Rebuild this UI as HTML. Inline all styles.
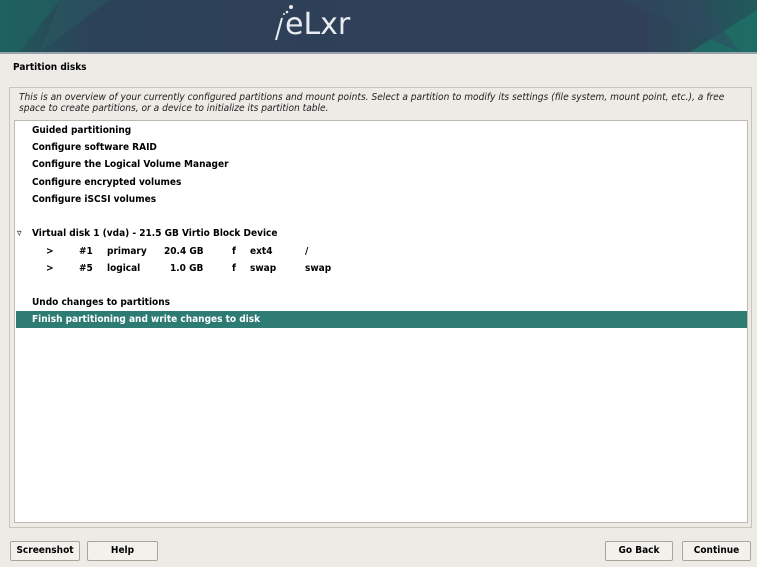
<!DOCTYPE html>
<html><head><meta charset="utf-8"><style>
*{margin:0;padding:0;box-sizing:border-box}
body{width:757px;height:567px;background:#edebe6;font-family:"DejaVu Sans Condensed","DejaVu Sans",sans-serif;position:relative;overflow:hidden;color:#000}
.hdr{position:absolute;left:0;top:0;width:757px;height:52px;background:linear-gradient(90deg,#1f5a5a 0%,#2c4258 12%,#2f4058 50%,#2f4058 85%,#215a5c 100%);overflow:hidden}
.line{position:absolute;left:0;top:52px;width:757px;height:2px;background:#9aa3ad}
.logo{position:absolute;left:285px;top:7px;color:#e8ecf0;font-family:"DejaVu Sans",sans-serif;font-size:30px}
.t{position:absolute;font-weight:bold;font-size:10px;white-space:pre}
.frame{position:absolute;left:9px;top:87px;width:743px;height:441px;border:1px solid #c9c5bd}
.list{position:absolute;left:14px;top:120px;width:734px;height:403px;background:#fff;border:1px solid #bdb9b0}
.hl{position:absolute;left:16px;top:311px;width:731px;height:17px;background:#2e7b74}
.desc{position:absolute;left:19px;top:92px;font-style:italic;font-size:10.1px;line-height:11px;color:#222;white-space:nowrap}
.btn{position:absolute;top:541px;height:20px;border:1px solid #a9a59d;border-radius:2px;background:#f3f1ec;font-weight:bold;font-size:10px;text-align:center;line-height:18px}
</style></head><body>
<div class="hdr">
<svg width="757" height="52" style="position:absolute;left:0;top:0">
<polygon points="0,0 60,0 20,52 0,52" fill="#1e6a64" opacity=".5"/>
<polygon points="60,0 110,0 40,52" fill="#2a5a62" opacity=".5"/>
<polygon points="690,52 757,10 757,52" fill="#1d7a6a" opacity=".6"/>
<polygon points="620,0 700,0 740,52" fill="#2f4a60" opacity=".5"/>
<line x1="276" y1="40" x2="282" y2="18" stroke="#e8ecf0" stroke-width="2"/>
<circle cx="287" cy="12" r="1.3" fill="#e8ecf0"/><circle cx="291" cy="7" r="2" fill="#e8ecf0"/><circle cx="284" cy="14" r="1" fill="#e8ecf0"/>
</svg>
<div class="logo">eLxr</div>
</div>
<div class="line"></div>
<div class="t" style="left:13px;top:62px">Partition disks</div>
<div class="frame"></div>
<div class="desc">This is an overview of your currently configured partitions and mount points. Select a partition to modify its settings (file system, mount point, etc.), a free<br>space to create partitions, or a device to initialize its partition table.</div>
<div class="list"></div>
<div class="hl"></div>
<div class="t" style="left:32px;top:125px">Guided partitioning</div>
<div class="t" style="left:32px;top:142px">Configure software RAID</div>
<div class="t" style="left:32px;top:159px">Configure the Logical Volume Manager</div>
<div class="t" style="left:32px;top:177px">Configure encrypted volumes</div>
<div class="t" style="left:32px;top:194px">Configure iSCSI volumes</div>
<div class="t" style="left:17px;top:228px;font-weight:normal">▿</div>
<div class="t" style="left:32px;top:228px">Virtual disk 1 (vda) - 21.5 GB Virtio Block Device</div>
<div class="t" style="left:46px;top:246px">&gt;</div><div class="t" style="left:79px;top:246px">#1</div><div class="t" style="left:107px;top:246px">primary</div><div class="t" style="left:164px;top:246px">20.4 GB</div><div class="t" style="left:232px;top:246px">f</div><div class="t" style="left:250px;top:246px">ext4</div><div class="t" style="left:305px;top:246px">/</div>
<div class="t" style="left:46px;top:263px">&gt;</div><div class="t" style="left:79px;top:263px">#5</div><div class="t" style="left:107px;top:263px">logical</div><div class="t" style="left:170px;top:263px">1.0 GB</div><div class="t" style="left:232px;top:263px">f</div><div class="t" style="left:250px;top:263px">swap</div><div class="t" style="left:305px;top:263px">swap</div>
<div class="t" style="left:32px;top:297px">Undo changes to partitions</div>
<div class="t" style="left:32px;top:314px;color:#fff">Finish partitioning and write changes to disk</div>
<div class="btn" style="left:10px;width:70px">Screenshot</div>
<div class="btn" style="left:87px;width:71px">Help</div>
<div class="btn" style="left:605px;width:68px">Go Back</div>
<div class="btn" style="left:682px;width:69px">Continue</div>
</body></html>
